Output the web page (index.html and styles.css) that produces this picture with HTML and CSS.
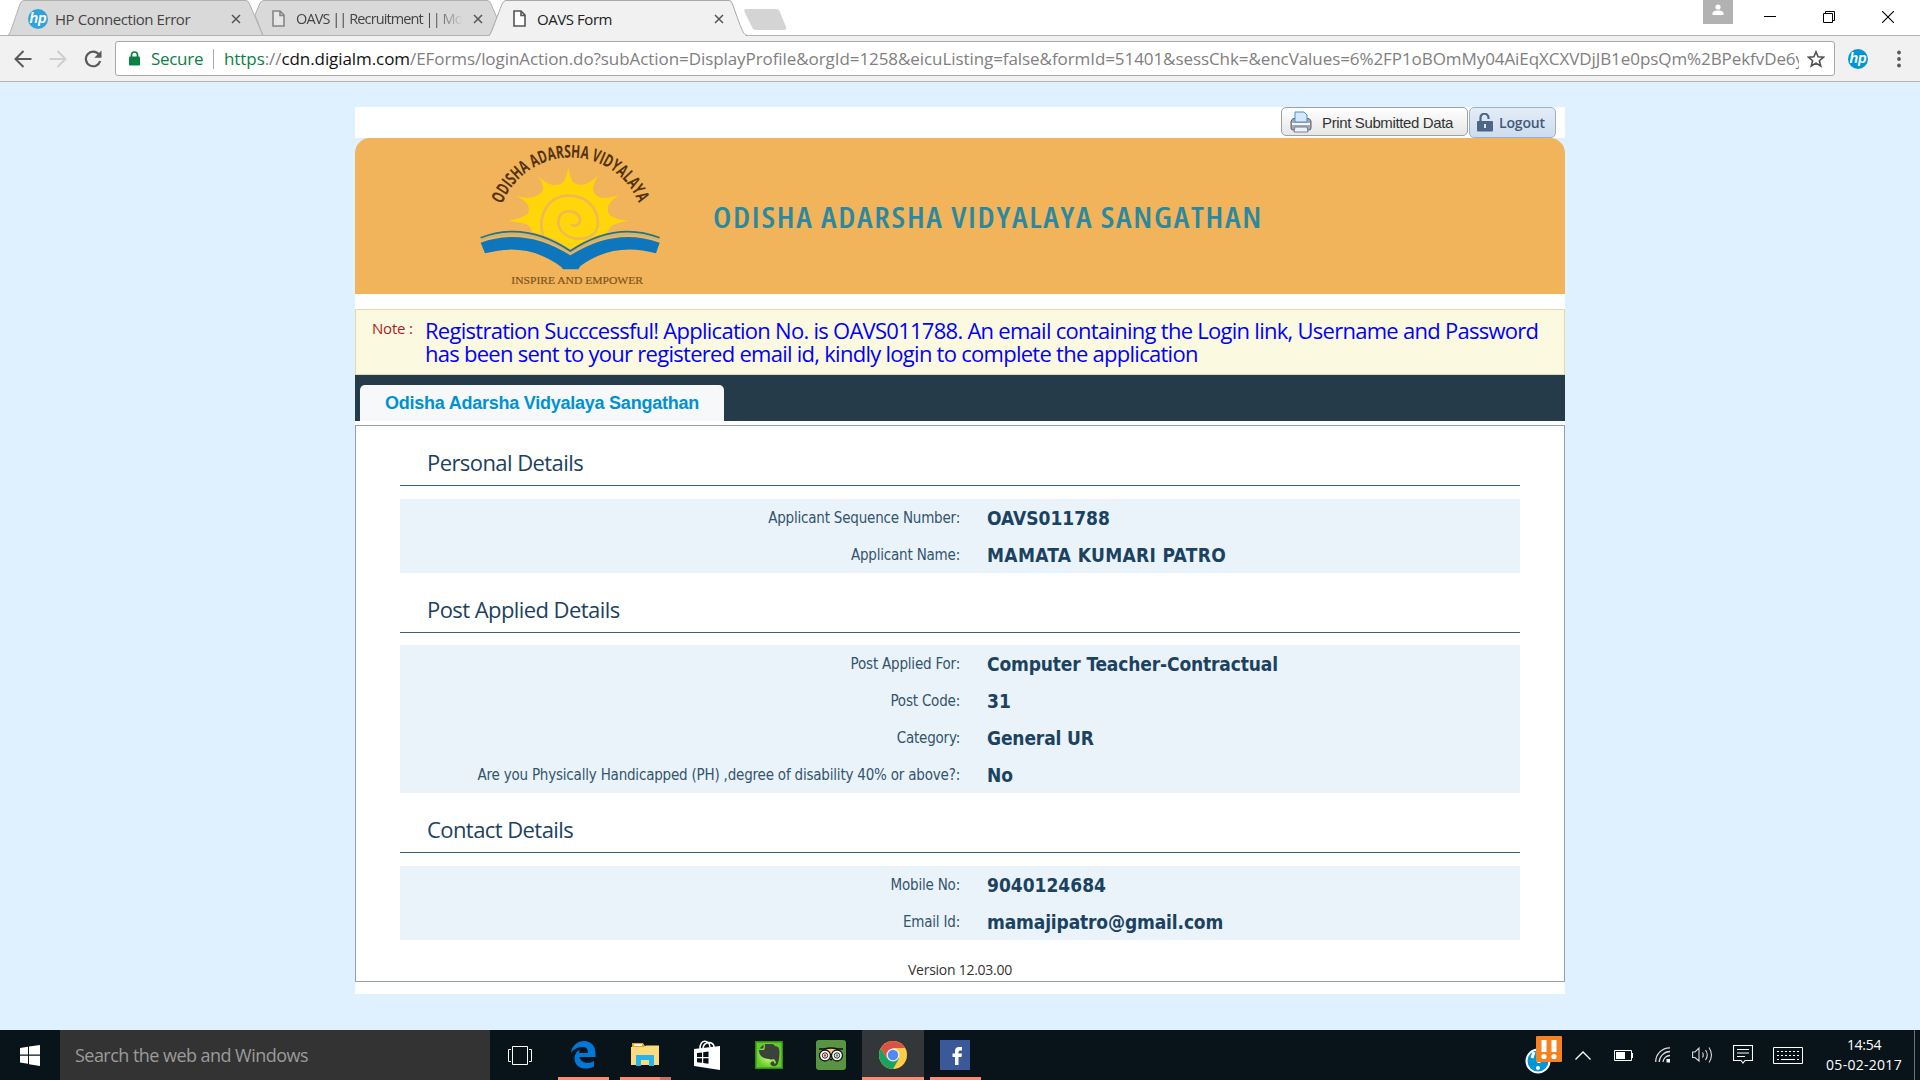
FILE: index.html
```html
<!DOCTYPE html>
<html lang="en">
<head>
<meta charset="utf-8">
<title>OAVS Form</title>
<link rel="stylesheet" href="styles.css">
</head>
<body>
<header class="browser">
  <div class="tabstrip">
    <svg class="tab-shapes" width="800" height="36" viewBox="0 0 800 36">
      <path d="M0 35.500H800" stroke="#b0b0b0"/>
      <path d="M7.500 35.500C10 34 10 33 20 4Q21.500 .5 24 .5H246Q248.500 .5 249.500 4L263 35.500Z" fill="#d9d9d9" stroke="#b0b0b0"/>
      <path d="M263 35.500L255 15L260 3Q261.500 .5 264 .5H487Q490 .5 491 4L497 18L490 35.500Z" fill="#d9d9d9" stroke="#b0b0b0"/>
      <path d="M489 36.500C491 34 492 30 502 4Q503.500 .5 506 .5H729Q731.500 .5 732.500 4C742 31 743 34 747 36.500Z" fill="#f1f1f1"/>
      <path d="M489 35.500C491 34 492 30 502 4Q503.500 .5 506 .5H729Q731.500 .5 732.500 4C742 31 743 34 747 35.500" fill="none" stroke="#a9a9a9"/>
      <path d="M746 9H776Q779 9 780 12L786 27Q787 30 784 30H756Q753 30 752 27L744.500 12Q743.500 9 746 9Z" fill="#d4d4d4"/>
    </svg>
    <div class="tab tab-one">
      <svg width="20" height="20" viewBox="0 0 20 20"><circle cx="10" cy="10" r="10" fill="#2ea3dc"/><text x="10" y="14" class="hp">hp</text></svg>
      <span class="tab-title">HP Connection Error</span>
      <svg class="close" width="10" height="10" viewBox="0 0 10 10"><path d="M1 1L9 9M9 1L1 9"/></svg>
    </div>
    <div class="tab tab-two">
      <svg width="13" height="17" viewBox="0 0 13 17"><path d="M1 1H8L12 5V16H1ZM8 1V5.500H12" fill="#e6e6e6" stroke="#868686" stroke-width="1.600"/></svg>
      <span class="tab-title t2">OAVS || Recruitment || Mo</span>
      <svg class="close" width="10" height="10" viewBox="0 0 10 10"><path d="M1 1L9 9M9 1L1 9"/></svg>
    </div>
    <div class="tab tab-three">
      <svg width="13" height="17" viewBox="0 0 13 17"><path d="M1 1H8L12 5V16H1ZM8 1V5.500H12" fill="#fff" stroke="#555" stroke-width="1.600"/></svg>
      <span class="tab-title t3">OAVS Form</span>
      <svg class="close" width="10" height="10" viewBox="0 0 10 10"><path d="M1 1L9 9M9 1L1 9"/></svg>
    </div>
    <div class="window-controls">
      <span class="profile"><svg width="12" height="12" viewBox="0 0 12 12" fill="#fff"><circle cx="6" cy="3" r="2.600"/><path d="M.5 11V9.500C.5 7 4 6.600 6 6.600S11.500 7 11.500 9.500V11Z"/></svg></span>
      <svg width="12" height="12" viewBox="0 0 12 12" fill="none" stroke="#000"><path d="M0 5.500H12"/></svg>
      <svg width="12" height="12" viewBox="0 0 12 12" fill="none" stroke="#000"><path d="M.5 2.500H9.500V11.500H.5ZM2.500 2.500V.5H11.500V9.500H9.500"/></svg>
      <svg width="12" height="12" viewBox="0 0 12 12" fill="none" stroke="#000" stroke-width="1.100"><path d="M0 0L12 12M12 0L0 12"/></svg>
    </div>
  </div>
  <div class="toolbar">
    <svg class="nav-icon" width="18" height="18" viewBox="0 0 18 18" fill="none" stroke="#5a5a5a" stroke-width="2"><path d="M17.500 9H2M9.500 1L1.500 9L9.500 17"/></svg>
    <svg class="nav-icon" width="18" height="18" viewBox="0 0 18 18" fill="none" stroke="#cfcfcf" stroke-width="2"><path d="M.5 9H16M8.500 1L16.500 9L8.500 17"/></svg>
    <svg class="nav-icon" width="18" height="18" viewBox="0 0 18 18"><path d="M15 4.500A7.300 7.300 0 1 0 16.200 11" fill="none" stroke="#5a5a5a" stroke-width="2.200"/><path d="M17.500 .5V7.800H10.300Z" fill="#5a5a5a"/></svg>
    <div class="omnibox">
      <svg width="11" height="15" viewBox="0 0 11 15"><rect y="5.500" width="11" height="9" rx="1" fill="#0b8043"/><path d="M2.500 6V4A3 3 0 0 1 8.500 4V6" fill="none" stroke="#0b8043" stroke-width="1.700"/></svg>
      <span class="secure">Secure</span>
      <span class="divider"></span>
      <span class="url"><b class="scheme">https</b>://<b class="host">cdn.digialm.com</b>/EForms/loginAction.do?subAction=DisplayProfile&amp;orgId=1258&amp;eicuListing=false&amp;formId=51401&amp;sessChk=&amp;encValues=6%2FP1oBOmMy04AiEqXCXVDjJB1e0psQm%2BPekfvDe6y</span>
      <svg width="18" height="18" viewBox="0 0 18 18"><path d="M9 1.800L11.100 6.800L16.500 7.200L12.400 10.700L13.700 16L9 13.100L4.300 16L5.600 10.700L1.500 7.200L6.900 6.800Z" fill="none" stroke="#4f4f4f" stroke-width="1.600"/></svg>
    </div>
    <svg class="ext" width="20" height="20" viewBox="0 0 20 20"><circle cx="10" cy="10" r="10" fill="#0096d6"/><text x="10" y="14" class="hp">hp</text></svg>
    <svg class="menu" width="4" height="18" viewBox="0 0 4 18" fill="#5a5a5a"><circle cx="2" cy="2.500" r="1.900"/><circle cx="2" cy="9" r="1.900"/><circle cx="2" cy="15.500" r="1.900"/></svg>
  </div>
</header>

<main class="page">
  <div class="container">
    <div class="actions">
      <div class="button print">
        <svg width="22" height="22" viewBox="0 0 22 22"><path d="M2 9Q2 7.500 4 7.500H18Q20 7.500 21 10V17Q21 19 19 19H3Q1 19 1 17V10Z" fill="#a4a8b0" stroke="#5c6169"/><path d="M5 11V1H14L17 4V11Z" fill="#d3e8fb" stroke="#4d8fd0"/><path d="M2 13H20" stroke="#f4f4f4" stroke-width="2"/><path d="M5 16H17L18 21H4Z" fill="#e9f3fb" stroke="#7b828c"/></svg>
        <span>Print Submitted Data</span>
      </div>
      <div class="button logout">
        <svg width="16" height="19" viewBox="0 0 16 19"><path d="M3.500 9V5A4 4 0 0 1 11.500 4.500V6" fill="none" stroke="#4d6587" stroke-width="2.200"/><rect y="8" width="16" height="10.500" rx="1" fill="#4d6587"/><path d="M8 11V15" stroke="#dbe5f1" stroke-width="2"/></svg>
        <span>Logout</span>
      </div>
    </div>
    <div class="banner-back">
      <div class="banner">
        <svg class="emblem" width="186" height="150" viewBox="380 120 558 450">
          <defs><path id="arc" d="M452 322A221 221 0 0 1 870 322"/></defs>
          <text class="arc-text"><textPath href="#arc" startOffset="10" textLength="524" lengthAdjust="spacingAndGlyphs">ODISHA ADARSHA VIDYALAYA</textPath></text>
          <path fill="#ffd60a" d="M475 362Q510 357 532 342Q540 326 531 312Q522 300 498 287Q530 298 552 290Q576 284 579 265Q578 246 560 226Q584 250 607 255Q636 257 643 240Q650 225 654 203Q659 232 667 246Q680 258 703 253Q722 247 745 225Q727 252 728 270Q732 288 752 293Q775 298 809 283Q780 301 773 318Q769 336 781 348Q801 360 834 362Q800 367 780 380L770 400Q710 415 660 448Q610 410 545 396Q540 375 525 371Q505 367 475 362Z"/>
          <path fill="none" stroke="#eebb52" stroke-width="8" d="M578 405C560 350 592 287 655 287C710 287 744 325 743 372C740 410 705 420 672 415C638 408 622 385 624 362C627 340 642 332 660 334C683 337 692 352 688 366C684 378 672 380 662 373"/>
          <path fill="#0d76bd" d="M391 428Q525 380 660 466Q795 380 928 428L917 460Q790 425 690 498L684 508H638L632 500Q530 425 404 460Z"/>
          <path fill="none" stroke="#c4b878" stroke-width="6" d="M392 419Q525 373 660 458Q795 373 927 419"/>
          <path fill="none" stroke="#2d6f7c" stroke-width="5" d="M391 413Q525 362 660 453Q795 362 928 413"/>
          <text class="motto" x="483" y="552" textLength="395" lengthAdjust="spacingAndGlyphs">INSPIRE AND EMPOWER</text>
        </svg>
        <svg class="banner-title" width="552" height="40" viewBox="0 0 552 40"><text x="0" y="32" textLength="550" lengthAdjust="spacingAndGlyphs">ODISHA ADARSHA VIDYALAYA SANGATHAN</text></svg>
      </div>
    </div>
    <div class="note">
      <span class="note-label">Note :</span>
      <p class="note-text">Registration Succcessful! Application No. is OAVS011788. An email containing the Login link, Username and Password<br>has been sent to your registered email id, kindly login to complete the application</p>
    </div>
    <nav class="form-nav"><div class="form-tab">Odisha Adarsha Vidyalaya Sangathan</div></nav>
    <section class="panel">
      <h2>Personal Details</h2>
      <dl>
        <dt>Applicant Sequence Number:</dt><dd>OAVS011788</dd>
        <dt>Applicant Name:</dt><dd class="wide">MAMATA KUMARI PATRO</dd>
      </dl>
      <h2>Post Applied Details</h2>
      <dl class="post">
        <dt>Post Applied For:</dt><dd class="tight">Computer Teacher-Contractual</dd>
        <dt>Post Code:</dt><dd>31</dd>
        <dt>Category:</dt><dd class="tight">General UR</dd>
        <dt>Are you Physically Handicapped (PH) ,degree of disability 40% or above?:</dt><dd>No</dd>
      </dl>
      <h2>Contact Details</h2>
      <dl>
        <dt>Mobile No:</dt><dd>9040124684</dd>
        <dt>Email Id:</dt><dd class="tight">mamajipatro@gmail.com</dd>
      </dl>
      <p class="version">Version 12.03.00</p>
    </section>
  </div>
</main>

<footer class="taskbar">
  <div class="start"><svg width="20" height="21" viewBox="0 0 20 21" fill="#fff"><path d="M0 3L8 1.800V9.500H0ZM9 1.600L20 0V9.500H9ZM0 10.700H8V18.800L0 17.600ZM9 10.700H20V21L9 19.300Z"/></svg></div>
  <div class="search">Search the web and Windows</div>
  <div class="slot view"><svg width="24" height="19" viewBox="0 0 24 19" fill="none" stroke="#fff"><path d="M4.500 .5H19.500V18.500H4.500ZM3 3.500H.5V15.500H3M21 3.500H23.500V15.500H21"/></svg></div>
  <div class="slot run"><svg width="26" height="28" viewBox="0 0 26 28"><path fill="#0078d7" d="M1 12C2 4 8 0 14 0C21 0 25.500 5 25.500 12V16H9.500C10 21 18 24 24 20V25.500C15 30 5 27 4.500 18C4.500 13 7 10 10 8.500C9.300 10 9.200 11 9 12H18C18 7 15.500 6 12.500 6C7 6 3 9 1 12Z"/></svg></div>
  <div class="slot run multi"><svg width="28" height="24" viewBox="0 0 28 24"><path fill="#e8ab18" d="M1 0H12L14 3H26V8H1Z"/><path fill="#fff" d="M3 1.200H11V3H3Z"/><path fill="#fbdc7c" d="M0 4H13L15 2.500H28V22H0Z"/><path fill="#27b4ee" d="M5 12H23V23H18V17H10V23H5Z"/></svg></div>
  <div class="slot"><svg width="26" height="30" viewBox="0 0 26 30"><path d="M6 9C6 -1 15 -1 16 7M9 8C10 1 20 1 20 7" fill="none" stroke="#fff" stroke-width="1.600"/><path d="M0 9L26 6V30L0 26Z" fill="#fff"/><path fill="#071014" d="M3 13L8 12.400V17H3ZM9.200 12.300L14.500 11.600V17H9.200ZM3 18.300H8V22.800L3 22.200ZM9.200 18.300H14.500V23.700L9.200 23Z"/></svg></div>
  <div class="slot"><svg width="28" height="28" viewBox="0 0 28 28"><defs><radialGradient id="leaf"><stop offset="0" stop-color="#e6ff9a"/><stop offset="1" stop-color="#62cc26"/></radialGradient></defs><rect width="28" height="28" fill="#2f8d16"/><rect x="1.500" y="1.500" width="25" height="25" fill="url(#leaf)"/><path fill="#3b423b" d="M10 3H17Q19 3 20 5Q24.500 5 24.500 11Q24.500 20 22 24Q20 26 16.500 24.500Q14 22 17 20.500H19V22.500H21Q21 19 18.500 18Q16 19 14 18Q12 18 9 17Q4 15 4 9H9Q10 8 10 3ZM8.500 3.500V7.500H4.500Z"/></svg></div>
  <div class="slot"><svg width="30" height="30" viewBox="0 0 30 30"><rect width="30" height="30" rx="3" fill="#589442"/><path d="M9 10Q15 7 21 10L17 14H13Z" fill="#f4cb7c"/><path d="M3 9H8Q15 7 22 9H27" fill="none" stroke="#111" stroke-width="1.500"/><g fill="#fff" stroke="#111" stroke-width="1.300"><circle cx="9" cy="15.500" r="5.500"/><circle cx="21" cy="15.500" r="5.500"/></g><g fill="none" stroke="#222"><circle cx="9" cy="15.500" r="2.700"/><circle cx="21" cy="15.500" r="2.700"/></g><circle cx="9" cy="15.500" r="1.300" fill="#df3030"/><circle cx="21" cy="15.500" r="1.300" fill="#3ca146"/><path d="M13.500 19H16.500L15 21Z" fill="#111"/></svg></div>
  <div class="slot active"><svg width="28" height="28" viewBox="0 0 28 28"><circle cx="14" cy="14" r="14" fill="#ffcd46"/><path d="M1.900 7A14 14 0 0 0 14 28L20 17.500L14 14L8 17.500Z" fill="#1aa260"/><path d="M1.900 7A14 14 0 0 1 26.100 7H14L8 17.500Z" fill="#de5246"/><circle cx="14" cy="14" r="6.500" fill="#f1f1f1"/><circle cx="14" cy="14" r="5.200" fill="#4c8bf5"/></svg></div>
  <div class="slot run"><svg width="30" height="30" viewBox="0 0 30 30"><rect width="30" height="30" fill="#3b5998"/><path fill="#fff" d="M15 25V17H12.500V13.500H15V11Q15 7 19 7H22V10.500H20Q18.500 10.500 18.500 12V13.500H22L21.500 17H18.500V25Z"/></svg></div>
  <div class="tray">
    <svg width="38" height="38" viewBox="0 0 38 38"><circle cx="13" cy="25" r="11.500" fill="#0096d6" stroke="#fff" stroke-width="2"/><path d="M9 16L7 22M14 24V27" stroke="#fff" stroke-width="3"/><circle cx="13" cy="32" r="2" fill="#fff"/><rect x="11" y="0" width="26" height="26" rx="1" fill="#f58220"/><path d="M19 4V16M29 4V16" stroke="#fff" stroke-width="5"/><circle cx="19" cy="20.500" r="2.600" fill="#fff"/><circle cx="29" cy="20.500" r="2.600" fill="#fff"/></svg>
    <svg class="chev" width="16" height="9" viewBox="0 0 16 9" fill="none" stroke="#fff" stroke-width="1.300"><path d="M.5 8.500L8 1L15.500 8.500"/></svg>
    <svg class="batt" width="19" height="11" viewBox="0 0 19 11"><path d="M.5 .5H17.500V10.500H.5ZM18.500 3V8" fill="none" stroke="#fff"/><path d="M2 2H11V9H2Z" fill="#fff"/></svg>
    <svg class="wifi" width="16" height="16" viewBox="0 0 16 16" fill="none" stroke="#ddd" stroke-width="1.300"><path d="M.7 15A14 14 0 0 1 15 .8M4.200 15A11 11 0 0 1 15 4.500M8 15A7 7 0 0 1 15 8.500"/><path d="M11.500 12H15V15.500H11.500Z" fill="#fff" stroke="none"/></svg>
    <svg class="vol" width="21" height="18" viewBox="0 0 21 18" fill="none" stroke="#ddd" stroke-width="1.100"><path d="M.6 6H3L7 2V15L3 11.500H.6ZM10.500 6.500Q12 9 10.500 11.500M13.500 4Q17 9 13.500 14M17 1.500Q22 9 17 16.500"/></svg>
    <svg class="msg" width="20" height="20" viewBox="0 0 20 20" fill="none" stroke="#fff" stroke-width="1.100"><path d="M.5 .5H19.500V15.500H12L10 18L8 15.500H.5ZM4 4.500H16M4 8H16M4 11.500H12"/></svg>
    <svg class="keys" width="30" height="17" viewBox="0 0 30 17" fill="none" stroke="#fff"><path d="M.5 .5H29.500V16.500H.5Z"/><path d="M4 4.500H27M4 8.500H27" stroke-dasharray="2 2"/><path d="M4 12.500H6M8 12.500H22M24 12.500H26"/></svg>
    <div class="clock"><span class="time">14:54</span><span>05-02-2017</span></div>
  </div>
</footer>
</body>
</html>
```
FILE: styles.css
```css
* { box-sizing: border-box; }
body { margin: 0; width: 1920px; height: 1080px; overflow: hidden; display: flex; flex-direction: column; background: #dff1fe; font-family: "Open Sans", sans-serif; }
svg { display: block; flex: none; }
h2, p, dl, dd { margin: 0; }

/* Browser chrome */
.browser { height: 82px; flex: none; }
.tabstrip { position: relative; height: 36px; display: flex; background: #fff; border-bottom: 1px solid #b0b0b0; }
.tab-shapes { position: absolute; left: 0; top: 0; }
.tab { position: relative; display: flex; align-items: center; height: 37px; font-size: 15px; letter-spacing: -.44px; color: #444; white-space: nowrap; }
.tab-one { padding-left: 28px; width: 256px; }
.tab-two { padding-left: 16px; width: 242px; }
.tab-three { padding-left: 15px; width: 250px; color: #222; }
.tab-title { margin-left: 7px; }
.t2, .t3 { margin-left: 11px; }
.t2 { width: 167px; overflow: hidden; font-size: 14.5px; letter-spacing: -.9px; -webkit-mask-image: linear-gradient(90deg, #000 82%, transparent); mask-image: linear-gradient(90deg, #000 82%, transparent); }
.close { margin-left: auto; stroke: #555; stroke-width: 1.5; }
.tab-one .close { margin-right: 15px; }
.tab-two .close { margin-right: 15px; }
.tab-three .close { margin-right: 24px; }
.hp { font: italic bold 14px "Liberation Sans", sans-serif; letter-spacing: 0; fill: #fff; text-anchor: middle; }
.window-controls { margin-left: auto; display: flex; align-items: flex-start; padding-right: 26px; }
.window-controls > svg { margin: 11px 0 0 47px; }
.window-controls > .profile + svg { margin-left: 31px; }
.profile { width: 30px; height: 24px; background: #b2b2b2; display: flex; justify-content: center; padding-top: 4px; }
.toolbar { height: 46px; display: flex; align-items: center; padding-left: 14px; background: #f1f1f1; border-bottom: 1px solid #b3b3b3; }
.nav-icon { margin-right: 17px; }
.nav-icon:nth-child(3) { margin-right: 13px; }
.omnibox { width: 1720px; height: 35px; display: flex; align-items: center; padding-left: 13px; background: #fff; border: 1px solid #a9a9a9; border-radius: 3px; font-size: 17px; }
.secure { width: 52px; margin-left: 11px; letter-spacing: -.3px; color: #0b8043; }
.divider { width: 1px; height: 20px; margin: 0 10px 0 10px; background: #aaa; }
.url { width: 1575px; height: 26px; line-height: 25px; margin-right: 8px; overflow: hidden; white-space: nowrap; letter-spacing: -.073px; color: #808080; }
.url b { font-weight: 400; }
.url .scheme { color: #0b8043; }
.url .host { color: #111; }
.ext { margin-left: 13px; }
.menu { margin-left: 29px; }

/* Form page */
.page { height: 948px; flex: none; padding-top: 25px; }
.container { width: 1210px; height: 887px; margin: 0 auto; background: #fff; }
.actions { height: 31px; display: flex; justify-content: flex-end; align-items: flex-start; gap: 1px; padding-right: 9px; }
.button { display: flex; align-items: center; border-radius: 5px; white-space: nowrap; }
.print { width: 187px; height: 29px; padding: 1px 0 0 8px; gap: 10px; border: 1px solid #a0a0a0; background: linear-gradient(#fff, #e6e6e6); font: 15px "Liberation Sans", sans-serif; letter-spacing: -.37px; color: #333; }
.logout { width: 87px; height: 31px; padding-left: 7px; gap: 6px; border: 1px solid #9fb1c8; background: linear-gradient(#e4edf8, #cddcee); font: 600 14px "Open Sans", sans-serif; letter-spacing: -.15px; color: #44597a; }
.banner-back { background: #dff1fe; }
.banner { height: 156px; display: flex; align-items: center; padding-left: 122px; background: #f1b45a; border-radius: 15px 15px 0 0; }
.emblem { margin-top: -2px; overflow: visible; }
.arc-text { font: bold 53px "Open Sans", sans-serif; fill: #53330f; }
.motto { font: 32px "Liberation Serif", serif; fill: #7d5520; stroke: #7d5520; stroke-width: .6; }
.banner-title { margin-left: 50px; overflow: visible; font-size: 29px; font-weight: 600; font-stretch: 75%; letter-spacing: 1.5px; fill: #2c88a0; }
.note { height: 66px; margin-top: 15px; display: flex; padding: 9px 0 0 16px; border: 1px solid #e0dcb0; background: #fbfae0; }
.note-label { flex: none; width: 53px; font-size: 15px; line-height: 19px; letter-spacing: -.2px; color: #b01c1c; white-space: nowrap; }
.note-text { font-size: 22px; line-height: 23px; letter-spacing: -.73px; color: #0000ff; white-space: nowrap; }
.form-nav { height: 46px; padding: 10px 0 0 5px; background: #253b49; }
.form-tab { width: 364px; height: 36px; padding-left: 25px; background: #f6f8fa; border-radius: 5px 5px 0 0; font: bold 18px/36px "Liberation Sans", sans-serif; letter-spacing: -.24px; color: #0091d5; white-space: nowrap; }
.panel { height: 557px; margin-top: 4px; padding: 0 44px; border: 1px solid #94a0aa; }
.panel h2 { height: 60px; padding: 20px 0 0 27px; border-bottom: 1px solid #3b6378; font-size: 22px; line-height: 32px; font-weight: 400; letter-spacing: -.57px; color: #1b4260; }
.panel dl { display: grid; grid-template-columns: 560px 1fr; grid-auto-rows: 37px; column-gap: 27px; margin-top: 13px; background: #eaf3f9; color: #1b4260; white-space: nowrap; }
.panel .post { margin-top: 12px; }
dt { text-align: right; font: 15px/38px "DejaVu Sans Condensed", sans-serif; letter-spacing: -.2px; color: #33546e; }
dd { font: bold 19px/39px "DejaVu Sans Condensed", sans-serif; }
.wide { letter-spacing: .33px; }
.tight { letter-spacing: -.14px; }
.version { margin-top: 20px; text-align: center; font-size: 14px; line-height: 20px; letter-spacing: -.26px; color: #333; }

/* Taskbar */
.taskbar { height: 50px; flex: none; display: flex; background: #08131a; }
.start { width: 60px; display: flex; align-items: center; justify-content: center; }
.search { width: 430px; padding-left: 15px; background: #333; color: #9b9b9b; font-size: 18px; line-height: 50px; letter-spacing: -.54px; white-space: nowrap; }
.slot { position: relative; width: 62px; display: flex; align-items: center; justify-content: center; }
.view { padding-right: 2px; }
.run::after, .active::after { content: ""; position: absolute; left: 6px; right: 5px; bottom: 0; height: 3px; background: #ff8a70; }
.active { background: #333739; }
.active::after { left: 0; right: 0; }
.multi::after { background: linear-gradient(90deg, #ff8a70 40px, #c9705f 40px); }
.tray { margin-left: auto; display: flex; align-items: center; width: 390px; color: #fff; border-right: 1px solid #6a7276; margin-right: 5px; }
.chev { margin-left: 12px; }
.batt { margin-left: 23px; }
.wifi { margin-left: 22px; }
.vol { margin-left: 21px; }
.msg { margin-left: 20px; }
.keys { margin-left: 20px; }
.clock { flex: none; width: 122px; display: flex; flex-direction: column; align-items: center; font-size: 14px; line-height: 20px; letter-spacing: .28px; }
.time { letter-spacing: -.3px; }
```
